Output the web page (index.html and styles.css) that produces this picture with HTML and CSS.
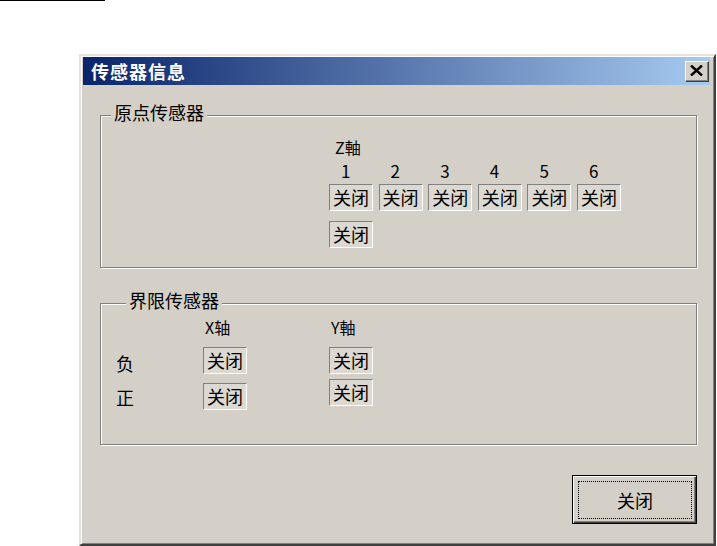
FILE: index.html
```html
<!DOCTYPE html>
<html lang="zh-CN">
<head>
    <meta charset="UTF-8">
    <meta name="viewport" content="width=device-width, initial-scale=1.0">
    <title>传感器信息</title>
    <link rel="stylesheet" href="styles.css">
</head>
<body>
    <div class="topline"></div>

    <div class="dialog">
        <div class="titlebar">
            <span class="title">传感器信息</span>
            <button class="close-x" type="button">
                <svg width="13" height="11" viewBox="0 0 13 11">
                    <path d="M1 0.5 L12 10.5 M12 0.5 L1 10.5" stroke="#000" stroke-width="2.4" fill="none"/>
                </svg>
            </button>
        </div>

        <div class="dialog-body">
            <!-- 原点传感器 -->
            <fieldset class="group group-origin">
                <legend>原点传感器</legend>
                <div class="axis-label z-label">Z軸</div>
                <div class="z-grid">
                    <span class="num">1</span>
                    <span class="num">2</span>
                    <span class="num">3</span>
                    <span class="num">4</span>
                    <span class="num">5</span>
                    <span class="num">6</span>
                    <span class="state">关闭</span>
                    <span class="state">关闭</span>
                    <span class="state">关闭</span>
                    <span class="state">关闭</span>
                    <span class="state">关闭</span>
                    <span class="state">关闭</span>
                    <span class="state wrap">关闭</span>
                </div>
            </fieldset>

            <!-- 界限传感器 -->
            <fieldset class="group group-limit">
                <legend>界限传感器</legend>
                <div class="limit-grid">
                    <span></span>
                    <span class="axis-label head">X轴</span>
                    <span class="axis-label head">Y軸</span>

                    <span class="side">负</span>
                    <span class="state">关闭</span>
                    <span class="state">关闭</span>

                    <span class="side">正</span>
                    <span class="state x-pos">关闭</span>
                    <span class="state y-pos">关闭</span>
                </div>
            </fieldset>

            <div class="footer">
                <button class="btn-default" type="button"><span>关闭</span></button>
            </div>
        </div>
    </div>
</body>
</html>
```

FILE: styles.css
```css
* {
    box-sizing: border-box;
}
html, body {
    margin: 0;
    height: 100%;
    overflow: hidden;
    background: #fff;
}
body {
    font-family: "Noto Sans CJK SC", "Noto Sans", sans-serif;
    font-size: 18px;
    color: #000;
}
.topline {
    width: 105px;
    height: 1px;
    background: #000;
}

/* fenetre */
.dialog {
    margin: 53px 0 0 79px;
    width: 637px;
    height: 492px;
    background: #d4d0c8;
    border: 2px solid;
    border-color: #e6e3de #404040 #404040 #e6e3de;
    box-shadow: inset 1px 1px 0 #fff, inset -1px -1px 0 #808080;
}
.titlebar {
    margin: 1px 4px 0 2px;
    height: 28px;
    display: flex;
    align-items: center;
    justify-content: space-between;
    padding: 0 1px 0 8px;
    background: linear-gradient(to right, #0a246a, #a6caf0);
}
.title {
    color: #fff;
    font-weight: bold;
    font-size: 18px;
    line-height: 18px;
    letter-spacing: 1px;
}
.close-x {
    width: 24px;
    height: 21px;
    padding: 0 1px 1px 0;
    display: flex;
    align-items: center;
    justify-content: center;
    background: #d4d0c8;
    border: 1px solid;
    border-color: #fff #404040 #404040 #fff;
    box-shadow: inset -1px -1px 0 #808080;
}

.dialog-body {
    padding: 0 17px 0 19px;
}

/* group box */
.group {
    margin: 18px 0 0;
    padding: 0 0 19px;
    border: 1px solid #808080;
    box-shadow: 1px 1px 0 #fff, inset 1px 1px 0 #fff;
    min-width: 0;
}
.group legend {
    margin-left: 10px;
    padding: 0 3px 7px;
    font-size: 18px;
    line-height: 18px;
    background: #d4d0c8;
}
.group-limit {
    margin-top: 23px;
    padding: 3px 0 34px 15px;
}

.axis-label {
    font-size: 16px;
    line-height: 16px;
}
.z-label {
    margin: 11px 0 0 234px;
}
.z-grid {
    display: grid;
    grid-template-columns: repeat(6, 44px);
    column-gap: 5.6px;
    row-gap: 5px;
    margin: 7px 0 0 228px;
}
.num {
    font-size: 17px;
    line-height: 17px;
    padding-left: 12px;
}
.state {
    width: 44px;
    height: 27px;
    border: 1px solid;
    border-color: #808080 #fff #fff #808080;
    background: #dcd9d2;
    font-size: 18px;
    line-height: 25px;
    text-align: center;
}
.z-grid .wrap {
    margin-top: 5px;
}

.limit-grid {
    display: grid;
    grid-template-columns: 87px 126px 44px;
    grid-template-rows: auto auto 31px;
    row-gap: 5px;
}
.limit-grid .head {
    padding-left: 2px;
    margin-bottom: 7px;
}
.limit-grid .x-pos {
    align-self: end;
}
.limit-grid .y-pos {
    align-self: start;
}
.side {
    align-self: center;
    line-height: 18px;
    padding-top: 4px;
}

/* bouton fermer */
.footer {
    display: flex;
    justify-content: flex-end;
    margin-top: 30px;
}
.btn-default {
    width: 125px;
    height: 49px;
    display: flex;
    padding: 5px 4px 4px 5px;
    font: inherit;
    background: #d4d0c8;
    border: 1px solid #000;
    box-shadow: inset 1px 1px 0 #fff, inset -1px -1px 0 #404040, inset -2px -2px 0 #808080;
}
.btn-default span {
    flex: 1;
    display: flex;
    align-items: center;
    justify-content: center;
    border: 1px dotted #000;
    font-size: 18px;
}
```
